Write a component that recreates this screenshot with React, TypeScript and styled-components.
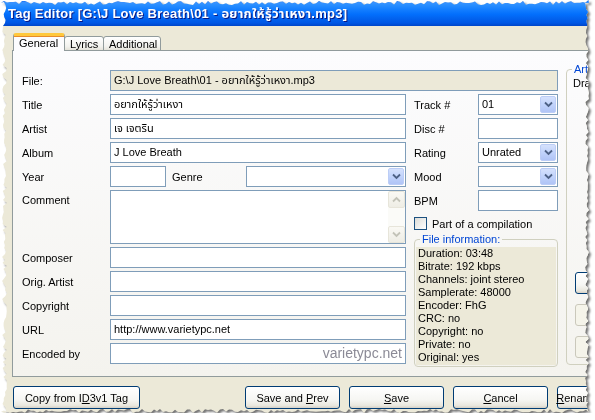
import React from 'react';
import styled, { createGlobalStyle } from 'styled-components';

const W = 588;
const H = 413;

function makeJagged(): string {
  let s = 12345;
  const r = () => {
    s = (s * 9301 + 49297) % 233280;
    return s / 233280;
  };
  const pts: string[] = [];
  const step = 3;
  for (let x = 0; x <= W; x += step) pts.push(`${x}px ${(r() * 4 + 1).toFixed(1)}px`);
  for (let y = 0; y <= H; y += step) pts.push(`${(W - r() * 4).toFixed(1)}px ${y}px`);
  for (let x = W; x >= 0; x -= step) pts.push(`${x}px ${(H - r() * 4).toFixed(1)}px`);
  for (let y = H; y >= 0; y -= step) pts.push(`${(r() * 5 + 1).toFixed(1)}px ${y}px`);
  return `polygon(${pts.join(',')})`;
}
const JAGGED = makeJagged();

const GlobalStyle = createGlobalStyle`
  html, body { margin: 0; padding: 0; background: #ffffff; }
  body {
    font-family: Tahoma, "Liberation Sans", "Noto Sans Thai", "DejaVu Sans", sans-serif;
    font-size: 11px;
    color: #000;
  }
  * { box-sizing: border-box; }
`;

const Frame = styled.div`
  width: ${W}px;
  height: ${H}px;
  margin-left: 1px;
  filter: drop-shadow(2px 2px 1px rgba(0, 0, 0, 0.55));
`;

const Window = styled.div`
  width: 100%;
  height: 100%;
  background: #ece9d8;
  clip-path: ${JAGGED};
  overflow: hidden;
  display: flex;
  flex-direction: column;
`;

const TitleBar = styled.div`
  height: 26px;
  flex: none;
  display: flex;
  align-items: center;
  padding: 2px 0 0 7px;
  background: linear-gradient(
    to bottom,
    #0058ee 0%,
    #3a93ff 10%,
    #288eff 20%,
    #127dff 38%,
    #036ffc 55%,
    #0262ee 72%,
    #0057e5 88%,
    #0046c9 100%
  );
  color: #fff;
  font-family: "Liberation Sans", "Noto Sans Thai", sans-serif;
  font-weight: bold;
  font-size: 13px;
  letter-spacing: 0.25px;
  text-shadow: 1px 1px 0 #0a1883;
  white-space: nowrap;
`;

const Body = styled.div`
  padding: 7px 0 0 11px;
  display: flex;
  flex-direction: column;
`;

const TabStrip = styled.div`
  display: flex;
  align-items: flex-end;
  height: 18px;
  padding-left: 1px;
  margin-bottom: -1px;
  position: relative;
  z-index: 1;
`;

const Tab = styled.div<{ $active?: boolean; $w: number }>`
  width: ${(p) => p.$w}px;
  height: ${(p) => (p.$active ? 18 : 15)}px;
  border: 1px solid #919b9c;
  border-bottom: ${(p) => (p.$active ? 'none' : '1px solid #919b9c')};
  border-radius: 3px 3px 0 0;
  margin-left: ${(p) => (p.$active ? 0 : -1)}px;
  background: ${(p) =>
    p.$active ? '#fcfcfe' : 'linear-gradient(to bottom, #ffffff, #f3f3ef 70%, #e5e3da)'};
  border-top: ${(p) => (p.$active ? '3px solid #ffc83c' : '1px solid #919b9c')};
  padding: 1px 0 0 5px;
  line-height: 12px;
  white-space: nowrap;
  box-shadow: ${(p) => (p.$active ? 'inset 0 1px 0 #e68b2c' : 'none')};
`;

const Panel = styled.div`
  width: 640px;
  height: 327px;
  border: 1px solid #919b9c;
  background: linear-gradient(to bottom, #fcfcfe, #f4f3ee);
  padding: 19px 0 0 9px;
  display: flex;
  gap: 8px;
`;

const LeftArea = styled.div`
  width: 536px;
  flex: none;
  display: flex;
  flex-direction: column;
`;

const Columns = styled.div`
  display: flex;
  gap: 8px;
  margin-top: 3px;
`;

const Col = styled.div<{ $w: number }>`
  width: ${(p) => p.$w}px;
  flex: none;
  display: flex;
  flex-direction: column;
  gap: 3px;
`;

const Row = styled.div<{ $h?: number; $top?: boolean }>`
  display: flex;
  align-items: ${(p) => (p.$top ? 'flex-start' : 'center')};
  height: ${(p) => p.$h ?? 21}px;
`;

const Label = styled.div<{ $w: number; $ml?: number; $pt?: number }>`
  width: ${(p) => p.$w}px;
  margin-left: ${(p) => p.$ml ?? 0}px;
  padding-top: ${(p) => p.$pt ?? 0}px;
  flex: none;
  white-space: nowrap;
`;

const TextBox = styled.div<{ $w?: number; $h?: number; $ro?: boolean }>`
  position: relative;
  width: ${(p) => (p.$w ? `${p.$w}px` : 'auto')};
  flex: ${(p) => (p.$w ? 'none' : '1')};
  height: ${(p) => p.$h ?? 21}px;
  border: 1px solid #7f9db9;
  background: ${(p) => (p.$ro ? '#ece9d8' : '#ffffff')};
  padding: 0 3px;
  line-height: 19px;
  white-space: nowrap;
  overflow: hidden;
`;

const DropButton = styled.div`
  position: absolute;
  right: 1px;
  top: 1px;
  width: 16px;
  height: 17px;
  border: 1px solid #bccdf6;
  border-radius: 2px;
  background: linear-gradient(to bottom, #d5e1fc, #c1d3fb 50%, #b0c4f6);
  display: flex;
  align-items: center;
  justify-content: center;
`;

const ScrollBar = styled.div`
  position: absolute;
  right: 0;
  top: 0;
  bottom: 0;
  width: 17px;
  background: #fbfbf8;
  display: flex;
  flex-direction: column;
  justify-content: space-between;
`;

const ScrollArrow = styled.div`
  width: 17px;
  height: 17px;
  border: 1px solid #e7e5da;
  border-radius: 2px;
  background: linear-gradient(to bottom, #faf9f4, #eeede5);
  display: flex;
  align-items: center;
  justify-content: center;
`;

const Watermark = styled.div`
  position: absolute;
  right: 3px;
  top: 0;
  font-family: "Liberation Sans", sans-serif;
  font-size: 14px;
  line-height: 19px;
  color: #8b8a96;
  text-shadow: 0 0 2px #ffffff, 0 0 3px #ffffff;
`;

const CheckRow = styled.div`
  display: flex;
  align-items: center;
  gap: 5px;
  height: 13px;
  margin-top: 3px;
`;

const CheckBox = styled.div`
  width: 13px;
  height: 13px;
  border: 1px solid #1c5180;
  background: linear-gradient(135deg, #dcdcd7, #ffffff);
`;

const Group = styled.fieldset<{ $w?: number; $h?: number }>`
  margin: 0;
  width: ${(p) => (p.$w ? `${p.$w}px` : 'auto')};
  height: ${(p) => (p.$h ? `${p.$h}px` : 'auto')};
  border: 1px solid #d0d0bf;
  border-radius: 4px;
  padding: 0 1px 1px 1px;
  min-width: 0;
`;

const Legend = styled.legend`
  color: #0046d5;
  padding: 0 2px;
  margin-left: 4px;
  line-height: 13px;
  white-space: nowrap;
`;

const InfoArea = styled.div`
  background: #ece9d8;
  margin-top: 1px;
  padding: 0 0 0 2px;
  height: 118px;
`;

const InfoLine = styled.div`
  line-height: 13px;
  white-space: nowrap;
`;

const RightCol = styled.div`
  margin-top: -7px;
  display: flex;
  flex-direction: column;
`;

const GroupText = styled.div`
  margin: 1px 0 0 5px;
  white-space: nowrap;
  line-height: 13px;
`;

const SideButtons = styled.div`
  display: flex;
  flex-direction: column;
  gap: 10px;
  margin: 182px 0 0 7px;
`;

const Button = styled.div<{ $w: number; $ml?: number; $disabled?: boolean; $h?: number }>`
  width: ${(p) => p.$w}px;
  height: ${(p) => p.$h ?? 23}px;
  margin-left: ${(p) => p.$ml ?? 0}px;
  flex: none;
  border: 1px solid ${(p) => (p.$disabled ? '#cac8bb' : '#003c74')};
  border-radius: 3px;
  background: ${(p) =>
    p.$disabled ? '#f5f4ea' : 'linear-gradient(to bottom, #ffffff 0%, #f6f6f3 60%, #e9e7de 88%, #d6d0c5 100%)'};
  display: flex;
  align-items: center;
  justify-content: center;
  white-space: nowrap;
  color: ${(p) => (p.$disabled ? '#a19f94' : '#000')};
`;

const Caption = styled.span`
  white-space: pre;
`;

const ButtonRow = styled.div`
  display: flex;
  gap: 9px;
  margin-top: 9px;
  padding-left: 1px;
`;

const Chevron = ({ down = true, color = '#4d6185' }: { down?: boolean; color?: string }) => (
  <svg width="9" height="7" viewBox="0 0 9 7">
    <path
      d={down ? 'M1 1.5 L4.5 5 L8 1.5' : 'M1 5.5 L4.5 2 L8 5.5'}
      fill="none"
      stroke={color}
      strokeWidth="1.8"
    />
  </svg>
);

const Combo = ({ w, value }: { w: number; value?: string }) => (
  <TextBox $w={w}>
    {value}
    <DropButton>
      <Chevron />
    </DropButton>
  </TextBox>
);

const info = [
  'Duration: 03:48',
  'Bitrate: 192 kbps',
  'Channels: joint stereo',
  'Samplerate: 48000',
  'Encoder: FhG',
  'CRC: no',
  'Copyright: no',
  'Private: no',
  'Original: yes',
];

export default function App() {
  return (
    <>
      <GlobalStyle />
      <Frame>
        <Window>
          <TitleBar>Tag Editor [G:\J Love Breath\01 - อยากให้รู้ว่าเหงา.mp3]</TitleBar>
          <Body>
            <TabStrip>
              <Tab $active $w={52}>General</Tab>
              <Tab $w={40}>Lyrics</Tab>
              <Tab $w={58}>Additional</Tab>
            </TabStrip>
            <Panel>
              <LeftArea>
                <Row>
                  <Label $w={88}>File:</Label>
                  <TextBox $ro>G:\J Love Breath\01 - อยากให้รู้ว่าเหงา.mp3</TextBox>
                </Row>
                <Columns>
                  <Col $w={384}>
                    <Row>
                      <Label $w={88}>Title</Label>
                      <TextBox $w={296}>อยากให้รู้ว่าเหงา</TextBox>
                    </Row>
                    <Row>
                      <Label $w={88}>Artist</Label>
                      <TextBox $w={296}>เจ เจตริน</TextBox>
                    </Row>
                    <Row>
                      <Label $w={88}>Album</Label>
                      <TextBox $w={296}>J Love Breath</TextBox>
                    </Row>
                    <Row>
                      <Label $w={88}>Year</Label>
                      <TextBox $w={56} />
                      <Label $w={74} $ml={6}>Genre</Label>
                      <Combo w={160} />
                    </Row>
                    <Row $h={54} $top>
                      <Label $w={88} $pt={4}>Comment</Label>
                      <TextBox $w={296} $h={54}>
                        <ScrollBar>
                          <ScrollArrow>
                            <Chevron down={false} color="#c3c3b8" />
                          </ScrollArrow>
                          <ScrollArrow>
                            <Chevron color="#c3c3b8" />
                          </ScrollArrow>
                        </ScrollBar>
                      </TextBox>
                    </Row>
                    <Row>
                      <Label $w={88}>Composer</Label>
                      <TextBox $w={296} />
                    </Row>
                    <Row>
                      <Label $w={88}>Orig. Artist</Label>
                      <TextBox $w={296} />
                    </Row>
                    <Row>
                      <Label $w={88}>Copyright</Label>
                      <TextBox $w={296} />
                    </Row>
                    <Row>
                      <Label $w={88}>URL</Label>
                      <TextBox $w={296}>http://www.varietypc.net</TextBox>
                    </Row>
                    <Row>
                      <Label $w={88}>Encoded by</Label>
                      <TextBox $w={296}>
                        <Watermark>varietypc.net</Watermark>
                      </TextBox>
                    </Row>
                  </Col>
                  <Col $w={144}>
                    <Row>
                      <Label $w={64}>Track #</Label>
                      <Combo w={80} value="01" />
                    </Row>
                    <Row>
                      <Label $w={64}>Disc #</Label>
                      <TextBox $w={80} />
                    </Row>
                    <Row>
                      <Label $w={64}>Rating</Label>
                      <Combo w={80} value="Unrated" />
                    </Row>
                    <Row>
                      <Label $w={64}>Mood</Label>
                      <Combo w={80} />
                    </Row>
                    <Row>
                      <Label $w={64}>BPM</Label>
                      <TextBox $w={80} />
                    </Row>
                    <CheckRow>
                      <CheckBox />
                      <span>Part of a compilation</span>
                    </CheckRow>
                    <Group $w={144}>
                      <Legend>File information:</Legend>
                      <InfoArea>
                        {info.map((l) => (
                          <InfoLine key={l}>{l}</InfoLine>
                        ))}
                      </InfoArea>
                    </Group>
                  </Col>
                </Columns>
              </LeftArea>
              <RightCol>
                <Group $w={90} $h={302}>
                  <Legend>Artwork</Legend>
                  <GroupText>Drag image here</GroupText>
                  <SideButtons>
                    <Button $w={75} $h={22}>Load...</Button>
                    <Button $w={75} $h={22} $disabled>Save...</Button>
                    <Button $w={75} $h={22} $disabled>Remove</Button>
                  </SideButtons>
                </Group>
              </RightCol>
            </Panel>
            <ButtonRow>
              <Button $w={127}>
                <Caption>
                  Copy from I<u>D</u>3v1 Tag
                </Caption>
              </Button>
              <Button $w={95} $ml={96}>
                <Caption>
                  {'Save and '}
                  <u>P</u>rev
                </Caption>
              </Button>
              <Button $w={95}>
                <Caption>
                  <u>S</u>ave
                </Caption>
              </Button>
              <Button $w={95}>
                <Caption>
                  <u>C</u>ancel
                </Caption>
              </Button>
              <Button $w={95}>
                <Caption>
                  <u>R</u>ename from Tag...
                </Caption>
              </Button>
            </ButtonRow>
          </Body>
        </Window>
      </Frame>
    </>
  );
}
